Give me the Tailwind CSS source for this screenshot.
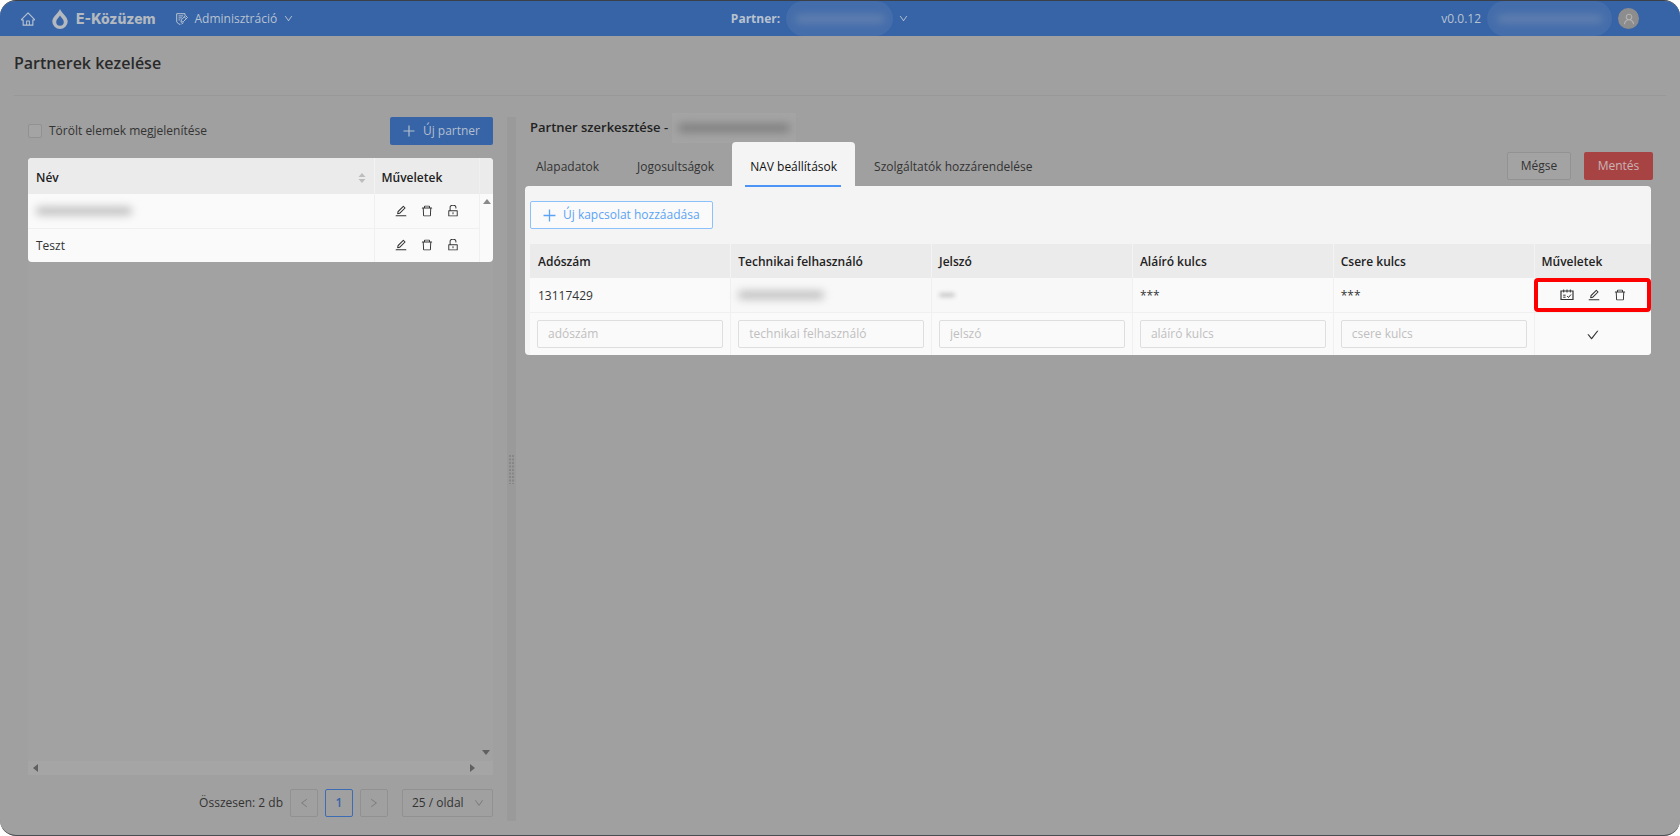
<!DOCTYPE html>
<html lang="hu">
<head>
<meta charset="utf-8">
<meta name="viewport" content="width=device-width, initial-scale=1">
<title>Partnerek kezelése</title>
<script src="https://cdn.jsdelivr.net/npm/@tailwindcss/browser@4"></script>
</head>
<body class="min-h-screen bg-white text-xs text-[#333] font-['Open_Sans','Noto_Sans',sans-serif]">
<svg class="hidden" aria-hidden="true">
  <symbol id="edit" viewBox="64 64 896 896"><path d="M257.7 752c2 0 4-.2 6-.5L431.9 722c2-.4 3.9-1.3 5.3-2.8l423.9-423.9a9.96 9.96 0 000-14.1L694.9 114.9c-1.9-1.9-4.4-2.9-7.1-2.9s-5.2 1-7.1 2.9L256.8 538.8c-1.5 1.5-2.4 3.3-2.8 5.3l-29.5 168.2a33.5 33.5 0 009.4 29.8c6.6 6.4 14.9 9.9 23.8 9.9zm67.4-174.4L687.8 215l73.3 73.3-362.7 362.6-88.9 15.7 15.6-89zM880 836H144c-17.7 0-32 14.3-32 32v36c0 4.4 3.6 8 8 8h784c4.4 0 8-3.6 8-8v-36c0-17.7-14.3-32-32-32z"/></symbol>
  <symbol id="trash" viewBox="64 64 896 896"><path d="M360 184h-8c4.4 0 8-3.6 8-8v8h304v-8c0 4.4 3.6 8 8 8h-8v72h72v-80c0-35.3-28.7-64-64-64H352c-35.3 0-64 28.7-64 64v80h72v-72zm504 72H160c-17.7 0-32 14.3-32 32v32c0 4.4 3.6 8 8 8h60.4l24.7 523c1.6 34.1 29.8 61 63.9 61h454c34.2 0 62.3-26.8 63.9-61l24.7-523H888c4.4 0 8-3.6 8-8v-32c0-17.7-14.3-32-32-32zM731.3 840H292.7l-24.2-512h487l-24.2 512z"/></symbol>
  <symbol id="unlock" viewBox="64 64 896 896"><path d="M832 464H332V240c0-70.7 57.3-128 128-128h104c70.7 0 128 57.3 128 128v68c0 4.4 3.6 8 8 8h56c4.4 0 8-3.6 8-8v-68c0-110.5-89.5-200-200-200H460c-110.5 0-200 89.5-200 200v224h-68c-17.7 0-32 14.3-32 32v384c0 17.7 14.3 32 32 32h640c17.7 0 32-14.3 32-32V496c0-17.7-14.3-32-32-32zm-40 376H232V536h560v304zM484 701v53c0 4.4 3.6 8 8 8h40c4.4 0 8-3.6 8-8v-53a48.01 48.01 0 10-56 0z"/></symbol>
  <symbol id="down" viewBox="64 64 896 896"><path d="M884 256h-75c-5.1 0-9.9 2.5-12.9 6.6L512 654.2 227.9 262.6c-3-4.1-7.8-6.6-12.9-6.6h-75c-6.5 0-10.3 7.4-6.5 12.7l352.6 486.1c12.8 17.6 39 17.6 51.7 0l352.6-486.1c3.9-5.3.1-12.7-6.4-12.7z"/></symbol>
  <symbol id="check" viewBox="64 64 896 896"><path d="M912 190h-69.9c-9.8 0-19.1 4.5-25.1 12.2L404.7 724.5 207 474a32 32 0 00-25.1-12.2H112c-6.7 0-10.4 7.7-6.3 12.9l273.9 347c12.8 16.2 37.4 16.2 50.3 0l488.4-618.9c4.1-5.1.4-12.8-6.3-12.8z"/></symbol>
  <symbol id="home" viewBox="32 64 960 896"><path d="M946.5 505L560.1 118.8l-25.9-25.9a31.5 31.5 0 00-44.4 0L77.5 505a63.9 63.9 0 00-18.8 46c.4 35.2 29.7 63.3 64.9 63.3h42.5V940h691.8V614.3h43.4c17.1 0 33.2-6.7 45.3-18.8a63.6 63.6 0 0018.7-45.3c0-17-6.7-33.1-18.8-45.2zM568 868H456V664h112v204zm217.9-325.7V868H632V640c0-22.1-17.9-40-40-40H432c-22.1 0-40 17.9-40 40v228H238.1V542.3h-96l370-369.7 23.1 23.1L882 542.3h-96.1z"/></symbol>
  <symbol id="user" viewBox="64 64 896 896"><path d="M858.5 763.6a374 374 0 00-80.6-119.5 375.63 375.63 0 00-119.5-80.6c-.4-.2-.8-.3-1.2-.5C719.5 518 760 444.7 760 362c0-137-111-248-248-248S264 225 264 362c0 82.7 40.5 156 102.8 201.1-.4.2-.8.3-1.2.5-44.8 18.9-85 46-119.5 80.6a375.63 375.63 0 00-80.6 119.5A371.7 371.7 0 00136 901.8a8 8 0 008 8.2h60c4.4 0 7.9-3.5 8-7.8 2-77.2 33-149.5 87.8-204.3 56.7-56.7 132-87.9 212.2-87.9s155.5 31.2 212.2 87.9C779 752.7 810 825 812 902.2c.1 4.4 3.6 7.8 8 7.8h60a8 8 0 008-8.2c-1-47.8-10.9-94.3-29.5-138.2zM512 534c-45.9 0-89.1-17.9-121.6-50.4S340 407.9 340 362c0-45.9 17.900-89.1 50.400-121.600S466.1 190 512 190s89.1 17.9 121.6 50.400S684 316.1 684 362c0 45.900-17.900 89.100-50.400 121.600S557.900 534 512 534z"/></symbol>
  <symbol id="plus" viewBox="0 0 12 12"><path d="M5.400.5h1.200v4.900h4.900v1.200H6.600v4.900H5.400V6.600H.5V5.400h4.900z"/></symbol>
  <symbol id="schedule" viewBox="0 0 14 12"><path fill="none" stroke="currentColor" stroke-width="1.200" d="M1 2h12v8.500H1z"/><path fill="none" stroke="currentColor" d="M3.700.5v3M7 .5v3M10.300.5v3M3.200 6.200h2.400M3.200 8.200h2.400M7.200 7l1.300 1.500L11 5.500"/></symbol>
  <symbol id="form" viewBox="0 0 12 12"><path fill="none" stroke="currentColor" d="M9 2.500V.7H.7v8.200l2.200 2.300h1.600M2.500 2.900h4.700M2.500 4.900h3.500M2.500 6.900h1.700M9.600 2.600l1.900 1.900-4.200 4.200-2.300.5.400-2.400zM8.300 3.900l1.900 1.900M5.500 11l2-1.300"/></symbol>
</svg>

<div class="flex min-h-screen flex-col overflow-hidden rounded-2xl border-t border-b border-t-[#3b4048] border-b-[#4a4d52] bg-[#a0a0a0]">
  <header class="flex h-[35px] shrink-0 items-center bg-[#3664a7] text-[#b8c2d0]">
    <div class="flex flex-1 items-center">
      <a href="#" aria-label="Kezdőlap" class="ml-5 flex"><svg class="h-[14px] w-4 fill-current"><use href="#home"/></svg></a>
      <a href="#" class="ml-4 flex items-center gap-2 font-['Inter',sans-serif] text-sm font-extrabold text-[#b4b9bf]">
        <svg class="h-5 w-4" viewBox="0 0 16 20"><path fill="#b4b9bf" fill-rule="evenodd" d="M8 0C6.500 4 .3 7.500.3 12.500a7.700 7.500 0 0015.400 0C15.700 7.500 9.500 4 8 0zM8 6.500c-1 2-3.800 3.700-3.800 6.500a3.800 3.700 0 007.600 0C11.800 10.200 9 8.500 8 6.500z"/></svg>
        E-Közüzem</a>
      <button type="button" class="ml-5 flex items-center gap-[7px]"><svg class="size-3"><use href="#form"/></svg>Adminisztráció<svg class="size-[9px] fill-current"><use href="#down"/></svg></button>
    </div>
    <div class="flex h-full items-center">
      <span class="font-bold">Partner:</span>
      <button type="button" aria-label="Partner választása" class="flex h-full items-center"><span class="mr-[6px] ml-[6px] flex h-full w-[107px] items-center justify-center rounded-full bg-[#446dab]"><span class="h-2 w-[90px] rounded-full bg-[#6482b0] blur-xs"></span></span><svg class="size-[9px] fill-current"><use href="#down"/></svg></button>
    </div>
    <div class="flex h-full flex-1 items-center justify-end pr-[41px]">
      <span>v0.0.12</span>
      <span class="mx-[6px] flex h-full w-[125px] items-center justify-center rounded-full bg-[#446dab]"><span class="h-2 w-[106px] rounded-full bg-[#6482b0] blur-xs"></span></span>
      <button type="button" aria-label="Felhasználó" class="flex size-[21px] items-center justify-center rounded-full bg-[#8d8d8d] text-[#b5b5b5]"><svg class="size-3 fill-current"><use href="#user"/></svg></button>
    </div>
  </header>

  <div class="mx-[14px] flex h-[60px] items-center border-b border-[#989898] pb-[6px]">
    <h1 class="text-base font-semibold text-[#2a2a2a]">Partnerek kezelése</h1>
  </div>

  <main class="flex min-h-0 flex-1 pt-[21px] pr-[27px] pb-[14px] pl-7">
    <section class="flex w-[465px] shrink-0 flex-col">
      <div class="flex h-7 items-center justify-between">
        <label class="flex items-center gap-[7px]"><input type="checkbox" class="size-[14px] appearance-none rounded-xs border border-[#919191] bg-[#a4a4a4]">Törölt elemek megjelenítése</label>
        <button type="button" class="flex h-7 items-center gap-2 rounded-xs bg-[#3664a7] px-[13px] text-[#b4bfce]"><svg class="size-3 fill-current"><use href="#plus"/></svg>Új partner</button>
      </div>
      <div class="mt-[13px] flex flex-1 flex-col bg-[#a3a3a3]">
        <div class="flex h-[104px] overflow-hidden rounded bg-[#fafafa]">
          <table class="w-[451px] table-fixed border-collapse">
            <thead><tr class="h-9 bg-[#ebebeb] text-left text-[#222]">
              <th class="px-2 pt-1 font-semibold"><div class="flex items-center justify-between">Név<svg class="h-[10px] w-2 fill-[#bdbdbd]" viewBox="0 0 8 10"><path d="M4 0l3.500 4h-7zM4 10l3.500-4h-7z"/></svg></div></th>
              <th class="w-[105px] border-l border-[#f3f3f3] px-[7px] pt-1 font-semibold">Műveletek</th></tr></thead>
            <tbody>
              <tr class="h-[34px] border-b border-[#f0f0f0]"><td class="px-2"><div class="h-2 w-24 rounded-full bg-[#bcbcbc] blur-xs"></div></td>
                <td class="border-l border-[#f0f0f0]"><div class="flex justify-center gap-[14px]">
                  <button type="button" aria-label="Szerkesztés"><svg class="size-3 fill-current"><use href="#edit"/></svg></button><button type="button" aria-label="Törlés"><svg class="size-3 fill-current"><use href="#trash"/></svg></button><button type="button" aria-label="Feloldás"><svg class="size-3 fill-current"><use href="#unlock"/></svg></button></div></td></tr>
              <tr class="h-[34px]"><td class="px-2 pt-[2px]">Teszt</td>
                <td class="border-l border-[#f0f0f0]"><div class="flex justify-center gap-[14px]">
                  <button type="button" aria-label="Szerkesztés"><svg class="size-3 fill-current"><use href="#edit"/></svg></button><button type="button" aria-label="Törlés"><svg class="size-3 fill-current"><use href="#trash"/></svg></button><button type="button" aria-label="Feloldás"><svg class="size-3 fill-current"><use href="#unlock"/></svg></button></div></td></tr>
            </tbody>
          </table>
          <div class="flex flex-1 flex-col border-l border-[#f0f0f0]"><div class="h-9 bg-[#ebebeb]"></div><svg class="mx-auto mt-[5px] h-[5px] w-2 fill-[#8a8a8a]" viewBox="0 0 8 5"><path d="M0 5l4-5 4 5z"/></svg></div>
        </div>
        <div class="flex flex-1 items-end justify-end bg-[#a2a2a2] pr-[3px] pb-[6px]"><svg class="h-[5px] w-2 fill-[#606060]" viewBox="0 0 8 5"><path d="M0 0l4 5 4-5z"/></svg></div>
        <div class="flex h-[14px] items-center justify-between bg-[#a5a5a5] pr-[18px] pl-[5px]">
          <svg class="h-2 w-[5px] fill-[#606060]" viewBox="0 0 5 8"><path d="M5 0L0 4l5 4z"/></svg><svg class="h-2 w-[5px] fill-[#606060]" viewBox="0 0 5 8"><path d="M0 0l5 4-5 4z"/></svg>
        </div>
      </div>
      <div class="mt-[14px] mb-1 flex h-7 items-center justify-end gap-[7px]">
        <span>Összesen: 2 db</span>
        <button type="button" aria-label="Előző" class="flex size-7 items-center justify-center rounded-xs border border-[#919191] text-[#7d7d7d]"><svg class="size-[10px] rotate-90 fill-current"><use href="#down"/></svg></button>
        <button type="button" class="size-7 rounded-xs border border-[#3c6cb3] font-semibold text-[#3664a7]">1</button>
        <button type="button" aria-label="Következő" class="flex size-7 items-center justify-center rounded-xs border border-[#919191] text-[#7d7d7d]"><svg class="size-[10px] -rotate-90 fill-current"><use href="#down"/></svg></button>
        <div class="relative ml-[7px] h-7 w-[91px]"><select aria-label="Oldalméret" class="h-full w-full appearance-none rounded-xs border border-[#919191] pl-[9px]"><option>25 / oldal</option></select><svg class="pointer-events-none absolute top-[9px] right-[9px] size-[10px] fill-[#7d7d7d]"><use href="#down"/></svg></div>
      </div>
    </section>

    <div class="mx-[14px] flex w-[9px] shrink-0 items-center justify-center bg-[#9a9a9a]" role="separator" aria-orientation="vertical">
      <svg class="h-[29px] w-[5px]" viewBox="0 0 5 29"><path fill="none" stroke="#868686" stroke-width="2" stroke-dasharray="2 1.500" d="M1 0v29M4 0v29"/></svg>
    </div>

    <section class="min-w-0 flex-1">
      <div class="flex h-[25px] items-center pb-[3px]">
        <h2 class="text-[13px] font-semibold text-[#222]">Partner szerkesztése -</h2>
        <span class="ml-1 flex h-[30px] w-[124px] items-center justify-center bg-[#a4a4a4]"><span class="h-2 w-28 rounded-full bg-[#7c7c7c] blur-xs"></span></span>
      </div>
      <div class="flex h-11 items-start">
        <nav class="flex h-full flex-1 items-end">
          <button type="button" class="ml-[6px] h-[38px]">Alapadatok</button>
          <button type="button" class="ml-[38px] h-[38px]">Jogosultságok</button>
          <button type="button" class="relative ml-[18px] h-11 w-[123px] rounded-t bg-[#f4f4f4] pt-[6px] font-medium text-[#111]">NAV beállítások<span class="absolute -bottom-px left-[13px] h-[2px] w-[96px] bg-[#4d94f7]"></span></button>
          <button type="button" class="ml-[19px] h-[38px]">Szolgáltatók hozzárendelése</button>
        </nav>
        <div class="mt-[10px] flex gap-[13px]">
          <button type="button" class="h-7 w-16 rounded-xs border border-[#929292] bg-[#a3a3a3]">Mégse</button>
          <button type="button" class="h-7 w-[69px] rounded-xs bg-[#a84344] text-[#c9b4b4]">Mentés</button>
        </div>
      </div>
      <div class="mr-[2px] -ml-[5px] overflow-hidden rounded bg-[#f4f4f4] pt-[15px]">
        <button type="button" class="ml-[5px] flex h-7 items-center gap-[7px] rounded-xs border border-[#8cc2fb] bg-[#fafafa] px-3 text-[#5ba4f5]"><svg class="size-[13px] fill-current"><use href="#plus"/></svg>Új kapcsolat hozzáadása</button>
        <div class="mt-[15px] pl-[5px]">
        <table class="w-full table-fixed border-collapse bg-[#fafafa]">
          <thead><tr class="h-[34px] bg-[#ebebeb] text-left text-[#222]">
            <th class="px-2 pt-[2px] font-semibold">Adószám</th><th class="border-l border-[#f3f3f3] px-[7px] pt-[2px] font-semibold">Technikai felhasználó</th><th class="border-l border-[#f3f3f3] px-[7px] pt-[2px] font-semibold">Jelszó</th><th class="border-l border-[#f3f3f3] px-[7px] pt-[2px] font-semibold">Aláíró kulcs</th><th class="border-l border-[#f3f3f3] px-[7px] pt-[2px] font-semibold">Csere kulcs</th><th class="w-[117px] border-l border-[#f3f3f3] px-[7px] pt-[2px] font-semibold">Műveletek</th></tr></thead>
          <tbody>
            <tr class="h-[34px] border-b border-[#f0f0f0]">
              <td class="px-2 pt-[2px]">13117429</td>
              <td class="border-l border-[#f0f0f0] bg-[#f8f8f8] px-[7px]"><div class="h-2 w-[86px] rounded-full bg-[#bcbcbc] blur-xs"></div></td>
              <td class="border-l border-[#f0f0f0] bg-[#f8f8f8] px-[7px]"><div class="h-1 w-4 rounded-full bg-[#c4c4c4] blur-[2px]"></div></td>
              <td class="border-l border-[#f0f0f0] px-[7px] pt-[2px]">***</td>
              <td class="border-l border-[#f0f0f0] px-[7px] pt-[2px]">***</td>
              <td class="p-0"><div class="flex h-[34px] items-center justify-center gap-[14px] rounded border-4 border-[#fe0000]">
                <button type="button" aria-label="Ütemezés"><svg class="h-3 w-[14px]"><use href="#schedule"/></svg></button><button type="button" aria-label="Szerkesztés"><svg class="size-3 fill-current"><use href="#edit"/></svg></button><button type="button" aria-label="Törlés"><svg class="size-3 fill-current"><use href="#trash"/></svg></button></div></td>
            </tr>
            <tr class="h-[42px]">
              <td class="px-[7px]"><input aria-label="Adószám" placeholder="adószám" class="block h-7 w-full rounded-xs border border-[#dedede] bg-[#fafafa] px-[10px] placeholder:text-[#bfbfbf]"></td>
              <td class="border-l border-[#f0f0f0] px-[7px]"><input aria-label="Technikai felhasználó" placeholder="technikai felhasználó" class="block h-7 w-full rounded-xs border border-[#dedede] bg-[#fafafa] px-[10px] placeholder:text-[#bfbfbf]"></td>
              <td class="border-l border-[#f0f0f0] px-[7px]"><input aria-label="Jelszó" placeholder="jelszó" class="block h-7 w-full rounded-xs border border-[#dedede] bg-[#fafafa] px-[10px] placeholder:text-[#bfbfbf]"></td>
              <td class="border-l border-[#f0f0f0] px-[7px]"><input aria-label="Aláíró kulcs" placeholder="aláíró kulcs" class="block h-7 w-full rounded-xs border border-[#dedede] bg-[#fafafa] px-[10px] placeholder:text-[#bfbfbf]"></td>
              <td class="border-l border-[#f0f0f0] px-[7px]"><input aria-label="Csere kulcs" placeholder="csere kulcs" class="block h-7 w-full rounded-xs border border-[#dedede] bg-[#fafafa] px-[10px] placeholder:text-[#bfbfbf]"></td>
              <td class="border-l border-[#f0f0f0] text-center"><button type="button" aria-label="Mentés" class="align-middle"><svg class="size-3 fill-current"><use href="#check"/></svg></button></td>
            </tr>
          </tbody>
        </table>
        </div>
      </div>
    </section>
  </main>
</div>
</body>
</html>
